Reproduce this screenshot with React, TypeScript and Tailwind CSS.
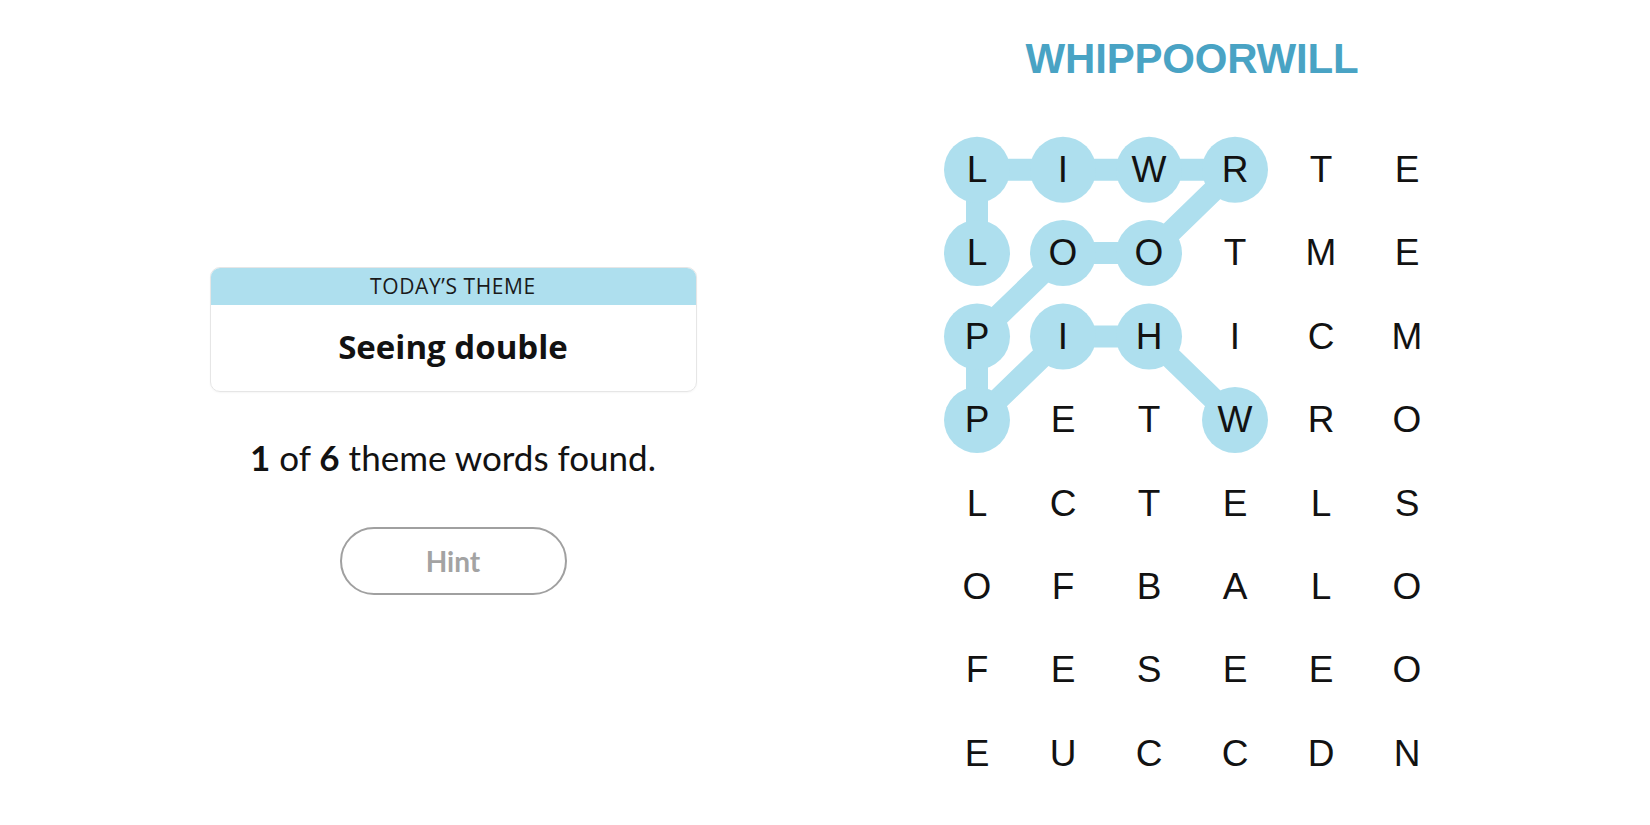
const letters = [
	"LIWRTE",
	"LOOTME",
	"PIHICM",
	"PETWRO",
	"LCTELS",
	"OFBALO",
	"FESEEO",
	"EUCCDN",
];

// path of the found word, as [row, col]
const found: [number, number][] = [
	[3, 3], [2, 2], [2, 1], [3, 0], [2, 0], [1, 1],
	[1, 2], [0, 3], [0, 2], [0, 1], [0, 0], [1, 0],
];

const CW = 86;
const CH = 83.4;

function WordPath() {
	const pts = found.map(([r, c]) => `${c * CW + CW / 2},${r * CH + CH / 2}`).join(" ");
	return (
		<svg className="absolute inset-0 pointer-events-none" width={CW * 6} height={CH * 8}>
			<polyline points={pts} fill="none" stroke="#aedfee" strokeWidth={22} strokeLinejoin="round" strokeLinecap="round"/>
			{found.map(([r, c]) => (
				<circle key={`${r}-${c}`} cx={c * CW + CW / 2} cy={r * CH + CH / 2} r={33} fill="#aedfee"/>
			))}
		</svg>
	);
}

export default function App() {
	return (
		<div className="w-[1650px] h-[825px] bg-white flex overflow-hidden" style={{fontFamily: "'Liberation Sans', Arial, sans-serif"}}>
			<div className="w-[906px] flex flex-col items-center pt-[267px]">
				<div className="w-[487px] h-[125px] rounded-[10px] border border-[#e6e6e6] overflow-hidden flex flex-col shadow-[0_1px_2px_rgba(0,0,0,0.04)]">
					<div className="h-[37px] bg-[#aedfee] flex items-center justify-center text-[21px] tracking-[0.6px] text-[#1a1a1a]"
						 style={{fontFamily: "'Open Sans', sans-serif"}}>
						TODAY’S THEME
					</div>
					<div className="flex-1 flex items-center justify-center text-[33px] font-bold text-[#121212] pb-[2px]"
						 style={{fontFamily: "'Open Sans', sans-serif"}}>
						Seeing double
					</div>
				</div>
				<p className="mt-[48px] text-[35px] text-[#121212] leading-none" style={{fontFamily: "Lato, sans-serif"}}>
					<span className="font-bold">1</span> of <span className="font-bold">6</span> theme words found.
				</p>
				<button className="mt-[52px] w-[227px] h-[68px] rounded-full border-2 border-[#a0a0a0] text-[#a3a3a3] text-[28px] font-bold"
						style={{fontFamily: "Lato, sans-serif"}}>
					Hint
				</button>
			</div>
			<div className="w-[572px] flex flex-col items-center">
				<h1 className="mt-[33px] text-[42px] font-bold text-[#49a3c4] leading-[52px] tracking-[-0.2px]">WHIPPOORWILL</h1>
				<div className="relative mt-[43px] w-[516px]">
					<WordPath/>
					<div className="relative grid grid-cols-6">
						{letters.map((row, r) => row.split("").map((ch, c) => (
							<div key={`${r}-${c}`} className="h-[83.4px] flex items-center justify-center text-[37px] text-[#121212]">
								{ch}
							</div>
						)))}
					</div>
				</div>
			</div>
		</div>
	);
}
